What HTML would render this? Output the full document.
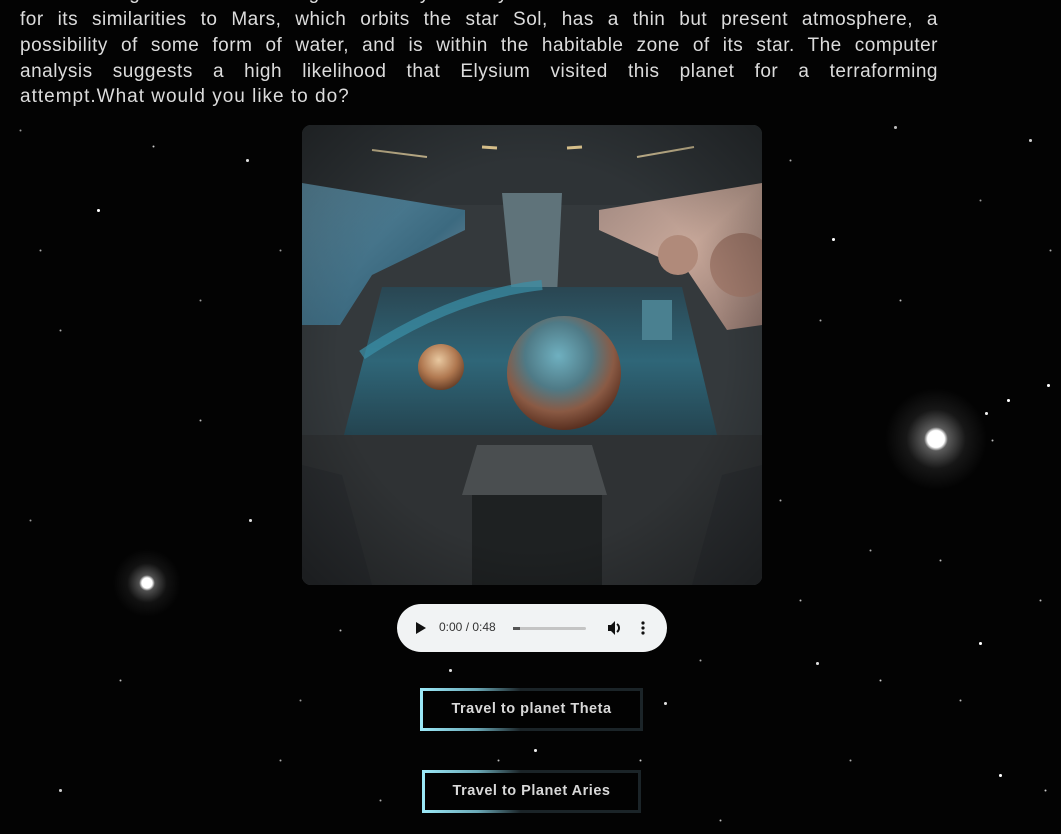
<!DOCTYPE html>
<html><head><meta charset="utf-8">
<style>
html,body{margin:0;padding:0;width:1061px;height:834px;overflow:hidden;background:#030303;}
body{position:relative;font-family:"Liberation Sans",sans-serif;}
.stars{position:absolute;left:0;top:0;width:1px;height:1px;border-radius:50%;background:transparent;
box-shadow:
98px 210px 0 1px #fff,247px 160px 0 1px #ddd,833px 239px 0 1px #fff,153px 146px 0 0.5px #ccc,895px 127px 0 1px #bbb,
1008px 400px 0 1px #fff,1048px 385px 0 1px #fff,986px 413px 0 1px #eee,992px 440px 0 0.5px #bbb,
980px 643px 0 1px #fff,817px 663px 0 1px #ddd,1000px 775px 0 1px #fff,1045px 790px 0 0.5px #ccc,
60px 330px 0 0.5px #aaa,200px 420px 0 0.5px #bbb,30px 520px 0 0.5px #999,250px 520px 0 1px #ddd,
120px 680px 0 0.5px #bbb,280px 760px 0 0.5px #aaa,60px 790px 0 1px #ccc,200px 300px 0 0.5px #999,
450px 670px 0 1px #ddd,510px 695px 0 0.5px #ccc,535px 750px 0 1px #eee,498px 760px 0 0.5px #bbb,
665px 703px 0 1px #ddd,640px 760px 0 0.5px #ccc,700px 660px 0 0.5px #aaa,720px 820px 0 0.5px #bbb,
870px 550px 0 0.5px #aaa,940px 560px 0 0.5px #bbb,820px 320px 0 0.5px #aaa,900px 300px 0 0.5px #bbb,
980px 200px 0 0.5px #999,1030px 140px 0 1px #ccc,790px 160px 0 0.5px #aaa,960px 700px 0 0.5px #bbb,
850px 760px 0 0.5px #aaa,340px 630px 0 0.5px #bbb,300px 700px 0 0.5px #999,380px 800px 0 0.5px #aaa,
20px 130px 0 0.5px #999,40px 250px 0 0.5px #aaa,280px 250px 0 0.5px #999,780px 500px 0 0.5px #aaa,
800px 600px 0 0.5px #bbb,1040px 600px 0 0.5px #bbb,1050px 250px 0 0.5px #aaa,880px 680px 0 0.5px #ccc;}
.glow1{position:absolute;left:876px;top:379px;width:120px;height:120px;border-radius:50%;background:radial-gradient(circle,#fff 0,#fff 10%,rgba(255,255,255,.35) 14%,rgba(255,255,255,.08) 35%,rgba(0,0,0,0) 60%);}
.glow2{position:absolute;left:107px;top:543px;width:80px;height:80px;border-radius:50%;background:radial-gradient(circle,#fff 0,#fff 9%,rgba(255,255,255,.3) 14%,rgba(255,255,255,.06) 35%,rgba(0,0,0,0) 60%);}
.t{position:absolute;left:20px;width:918px;margin:0;color:#dcdcdc;font-size:19px;line-height:26px;height:26px;text-align:justify;text-align-last:justify;letter-spacing:0.5px;white-space:nowrap;overflow:hidden;}
.t.l{text-align-last:left;letter-spacing:1px;}
.img{position:absolute;left:302px;top:125px;width:460px;height:460px;border-radius:9px;overflow:hidden;}
.audio{position:absolute;left:397px;top:604px;width:270px;height:48px;border-radius:24px;background:#f1f3f4;font-size:12px;color:#333;}
.btn{position:absolute;height:37px;border:3px solid;border-image:linear-gradient(90deg,#9be8f7 0%,#6aa8b6 25%,#1b2428 45%,#1b2428 100%) 1;background:#020202;color:#d8d8d8;font-weight:bold;font-size:14.5px;text-align:center;line-height:37px;letter-spacing:0.5px;}
</style></head><body>
<div class="stars"></div>
<div class="glow1"></div><div class="glow2"></div>
<div class="t" style="top:-19px">has long been targeted by Elysium for a colonization effort</div>
<div class="t" style="top:7px">for its similarities to Mars, which orbits the star Sol, has a thin but present atmosphere, a</div>
<div class="t" style="top:33px">possibility of some form of water, and is within the habitable zone of its star. The computer</div>
<div class="t" style="top:59px">analysis suggests a high likelihood that Elysium visited this planet for a terraforming</div>
<div class="t l" style="top:84px">attempt.What would you like to do?</div>
<div class="img"><svg width="460" height="460" viewBox="0 0 460 460">
<defs>
<radialGradient id="bp" cx="45%" cy="35%" r="65%"><stop offset="0" stop-color="#6fb0c0"/><stop offset=".45" stop-color="#4f7a86"/><stop offset=".75" stop-color="#8a5a44"/><stop offset="1" stop-color="#5a3020"/></radialGradient>
<radialGradient id="sp" cx="45%" cy="35%" r="65%"><stop offset="0" stop-color="#e8c8a0"/><stop offset=".6" stop-color="#b07850"/><stop offset="1" stop-color="#6a4028"/></radialGradient>
<linearGradient id="lw" x1="0" y1="0" x2="1" y2="1"><stop offset="0" stop-color="#5e8ea4"/><stop offset=".6" stop-color="#3c6a80"/><stop offset="1" stop-color="#8a9aa8"/></linearGradient>
<linearGradient id="rw" x1="0" y1="0" x2="1" y2="1"><stop offset="0" stop-color="#a08880"/><stop offset=".5" stop-color="#c8a89a"/><stop offset="1" stop-color="#8a7068"/></linearGradient>
<linearGradient id="sc" x1="0" y1="0" x2="0" y2="1"><stop offset="0" stop-color="#2a4652"/><stop offset=".5" stop-color="#2f6678"/><stop offset="1" stop-color="#244450"/></linearGradient>
<radialGradient id="vig" cx="50%" cy="50%" r="70%"><stop offset=".6" stop-color="#000" stop-opacity="0"/><stop offset="1" stop-color="#000" stop-opacity=".35"/></radialGradient>
</defs>
<rect width="460" height="460" fill="#34393c"/>
<rect width="460" height="80" fill="#2e3336"/>
<polygon points="0,58 163,85 163,105 70,150 38,200 0,200" fill="url(#lw)"/>
<polygon points="297,85 460,58 460,200 425,205 385,145 297,105" fill="url(#rw)"/>
<circle cx="376" cy="130" r="20" fill="#b08a7a"/><circle cx="440" cy="140" r="32" fill="#a07a6c"/>
<polygon points="200,68 260,68 255,170 210,170" fill="#5f737a"/>
<polygon points="80,162 380,162 415,310 42,310" fill="url(#sc)"/>
<path d="M60,230 Q150,170 240,160" stroke="#3a90a8" stroke-width="10" fill="none" opacity=".7"/>
<circle cx="262" cy="248" r="57" fill="url(#bp)"/>
<circle cx="139" cy="242" r="23" fill="url(#sp)"/>
<rect x="340" y="175" width="30" height="40" fill="#4a8090"/>
<rect x="0" y="310" width="460" height="150" fill="#2f3234"/>
<polygon points="175,320 290,320 305,370 160,370" fill="#4a4e50"/>
<rect x="170" y="370" width="130" height="90" fill="#1e2122"/>
<polygon points="0,340 40,350 70,460 0,460" fill="#2a2d30"/>
<polygon points="460,340 420,350 390,460 460,460" fill="#2a2d30"/>
<line x1="70" y1="25" x2="125" y2="32" stroke="#c8b890" stroke-width="2"/>
<line x1="335" y1="32" x2="392" y2="22" stroke="#c8b890" stroke-width="2"/>
<line x1="180" y1="22" x2="195" y2="23" stroke="#e0c890" stroke-width="3"/>
<line x1="265" y1="23" x2="280" y2="22" stroke="#e0c890" stroke-width="3"/>
<rect width="460" height="460" fill="url(#vig)"/>
</svg></div>
<div class="audio">
<svg style="position:absolute;left:19px;top:18px" width="10" height="12"><polygon points="0,0 10,6 0,12" fill="#111"/></svg>
<span style="position:absolute;left:42px;top:16px">0:00 / 0:48</span>
<div style="position:absolute;left:116px;top:23px;width:73px;height:3px;background:#c4c4c4;border-radius:2px"><div style="width:7px;height:3px;background:#555"></div></div>
<svg style="position:absolute;left:210px;top:16px" width="16" height="16" viewBox="0 0 16 16"><path d="M1,5h3l4-4v14l-4-4h-3z" fill="#111"/><path d="M10,4a5,5 0 0 1 0,8" stroke="#111" stroke-width="2" fill="none"/></svg>
<svg style="position:absolute;left:244px;top:17px" width="4" height="14"><circle cx="2" cy="2" r="1.6" fill="#111"/><circle cx="2" cy="7" r="1.6" fill="#111"/><circle cx="2" cy="12" r="1.6" fill="#111"/></svg>
</div>
<div class="btn" style="left:420px;top:688px;width:217px">Travel to planet Theta</div>
<div class="btn" style="left:422px;top:770px;width:213px">Travel to Planet Aries</div>
</body></html>
